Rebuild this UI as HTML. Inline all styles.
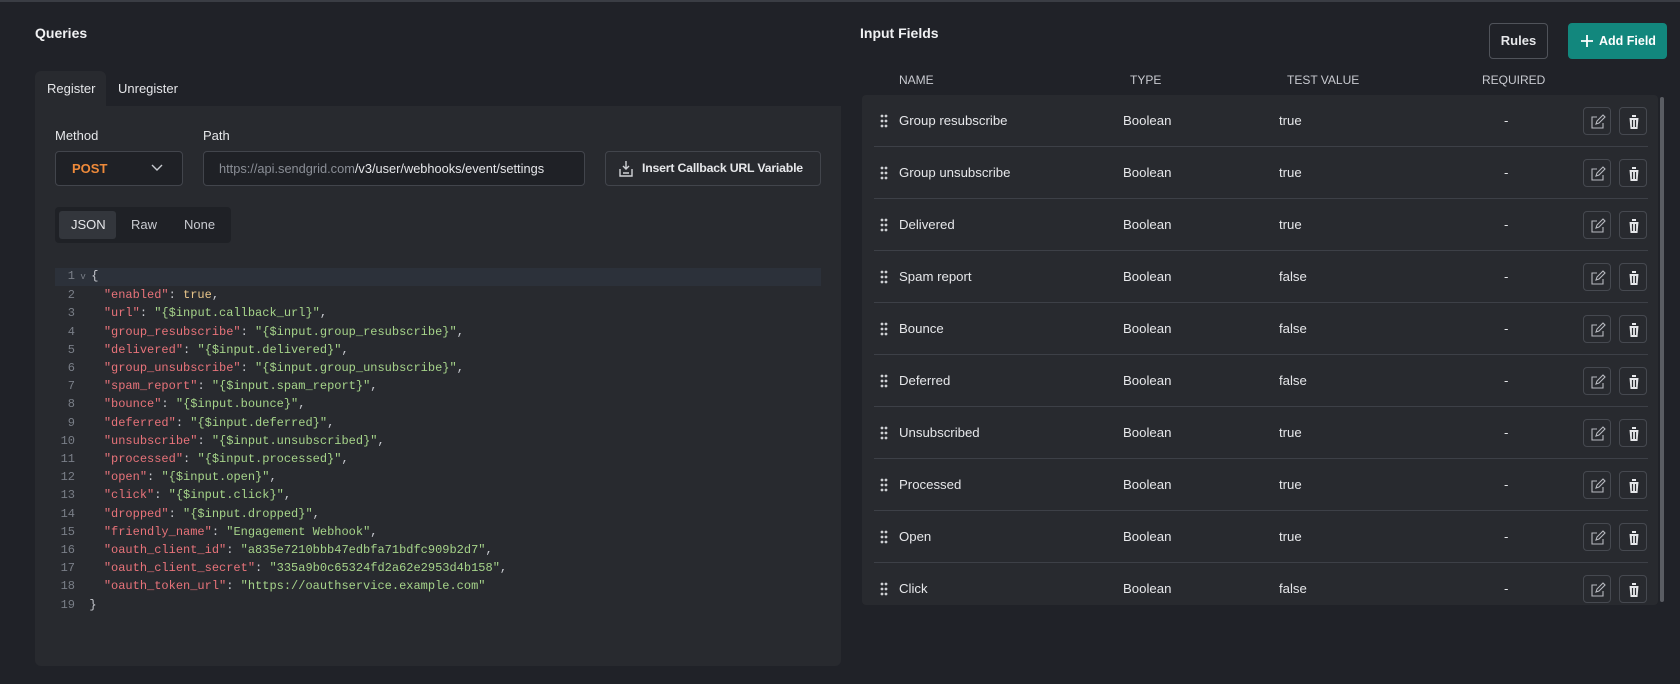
<!DOCTYPE html>
<html><head><meta charset="utf-8"><style>
*{box-sizing:border-box;margin:0;padding:0}
body{width:1680px;height:684px;background:#202228;font-family:"Liberation Sans",sans-serif;color:#e6e7ea;position:relative;overflow:hidden;border-top:2px solid #3a3d44}
.a{position:absolute}
.title{font-size:14px;font-weight:bold;color:#f0f1f3}
.panel{left:35px;top:104px;width:806px;height:560px;background:#282a2f;border-radius:0 0 6px 6px}
.tab{top:69px;height:35px;font-size:13px;line-height:35px;padding:0 12px}
.lbl{font-size:13px;color:#e6e7ea}
.box{border:1px solid #42454c;border-radius:4px;background:#1f2126;height:35px;font-size:13px;line-height:33px}
.code{font-family:"Liberation Mono",monospace;font-size:12px;line-height:18.2px;white-space:pre}
.k{color:#e8737a}.s{color:#a6d48a}.v{color:#e8c58a}.p{color:#c8cad0}
.ln{color:#7a7f88;text-align:right;width:20px;display:inline-block}
.hdr{font-size:12px;color:#c8cad0;top:71px}
.tbl{left:862px;top:93px;width:796px;height:510px;background:#282a2f;border-radius:4px}
.row{position:absolute;left:0;width:796px;height:52px;font-size:13.2px;line-height:52px}
.row .sep{position:absolute;left:12px;right:10px;bottom:0;height:1px;background:#3d4047}
.ib{position:absolute;top:12px;width:28px;height:28px;border:1px solid #464950;border-radius:4px}
.ib svg{position:absolute;left:6px;top:6px}
</style></head><body>
<div class="a title" style="left:35px;top:23px">Queries</div>
<div class="a title" style="left:860px;top:23px">Input Fields</div>

<div class="a tab" style="left:35px;width:71px;background:#282a2f;border-radius:6px 6px 0 0">Register</div>
<div class="a tab" style="left:106px">Unregister</div>
<div class="a panel"></div>

<div class="a lbl" style="left:55px;top:126px">Method</div>
<div class="a lbl" style="left:203px;top:126px">Path</div>
<div class="a box" style="left:55px;top:149px;width:128px;padding-left:16px;color:#ee8a3a;font-weight:bold">POST
<svg class="a" style="left:95px;top:12px" width="12" height="8" viewBox="0 0 12 8"><path d="M1 1l5 5 5-5" stroke="#c8cad0" stroke-width="1.4" fill="none"/></svg></div>
<div class="a box" style="left:203px;top:149px;width:382px;padding-left:15px;color:#e6e7ea;font-size:12.8px"><span style="color:#8a8e96">https://api.sendgrid.com</span>/v3/user/webhooks/event/settings</div>
<div class="a box" style="left:605px;top:149px;width:216px;background:#282a2f;font-weight:bold;padding-left:36px;font-size:12.3px;letter-spacing:-0.2px">Insert Callback URL Variable
<svg class="a" style="left:12px;top:8px" width="16" height="18" viewBox="0 0 16 18"><path d="M8 1v8M5 6l3 3 3-3M2 9v7h12v-7M5 13h6" stroke="#d0d2d6" stroke-width="1.4" fill="none"/></svg></div>

<div class="a" style="left:55px;top:205px;width:176px;height:36px;background:#1f2126;border-radius:4px"></div>
<div class="a" style="left:59px;top:209px;width:57px;height:28px;background:#33363c;border-radius:3px"></div>
<div class="a lbl" style="left:71px;top:215px">JSON</div>
<div class="a lbl" style="left:131px;top:215px;color:#c8cad0">Raw</div>
<div class="a lbl" style="left:184px;top:215px;color:#c8cad0">None</div>

<div class="a" style="left:55px;top:266px;width:766px;height:18px;background:#2c313a"></div>
<div class="a code" style="left:55px;top:265px"><span class="ln">1</span><span style="color:#7a7f88;font-size:9px"> v </span><span class="p">{</span>
<span class="ln">2</span>    <span class="k">"enabled"</span><span class="p">: </span><span class="v">true</span><span class="p">,</span>
<span class="ln">3</span>    <span class="k">"url"</span><span class="p">: </span><span class="s">"{$input.callback_url}"</span><span class="p">,</span>
<span class="ln">4</span>    <span class="k">"group_resubscribe"</span><span class="p">: </span><span class="s">"{$input.group_resubscribe}"</span><span class="p">,</span>
<span class="ln">5</span>    <span class="k">"delivered"</span><span class="p">: </span><span class="s">"{$input.delivered}"</span><span class="p">,</span>
<span class="ln">6</span>    <span class="k">"group_unsubscribe"</span><span class="p">: </span><span class="s">"{$input.group_unsubscribe}"</span><span class="p">,</span>
<span class="ln">7</span>    <span class="k">"spam_report"</span><span class="p">: </span><span class="s">"{$input.spam_report}"</span><span class="p">,</span>
<span class="ln">8</span>    <span class="k">"bounce"</span><span class="p">: </span><span class="s">"{$input.bounce}"</span><span class="p">,</span>
<span class="ln">9</span>    <span class="k">"deferred"</span><span class="p">: </span><span class="s">"{$input.deferred}"</span><span class="p">,</span>
<span class="ln">10</span>    <span class="k">"unsubscribe"</span><span class="p">: </span><span class="s">"{$input.unsubscribed}"</span><span class="p">,</span>
<span class="ln">11</span>    <span class="k">"processed"</span><span class="p">: </span><span class="s">"{$input.processed}"</span><span class="p">,</span>
<span class="ln">12</span>    <span class="k">"open"</span><span class="p">: </span><span class="s">"{$input.open}"</span><span class="p">,</span>
<span class="ln">13</span>    <span class="k">"click"</span><span class="p">: </span><span class="s">"{$input.click}"</span><span class="p">,</span>
<span class="ln">14</span>    <span class="k">"dropped"</span><span class="p">: </span><span class="s">"{$input.dropped}"</span><span class="p">,</span>
<span class="ln">15</span>    <span class="k">"friendly_name"</span><span class="p">: </span><span class="s">"Engagement Webhook"</span><span class="p">,</span>
<span class="ln">16</span>    <span class="k">"oauth_client_id"</span><span class="p">: </span><span class="s">"a835e7210bbb47edbfa71bdfc909b2d7"</span><span class="p">,</span>
<span class="ln">17</span>    <span class="k">"oauth_client_secret"</span><span class="p">: </span><span class="s">"335a9b0c65324fd2a62e2953d4b158"</span><span class="p">,</span>
<span class="ln">18</span>    <span class="k">"oauth_token_url"</span><span class="p">: </span><span class="s">"https://oauthservice.example.com"</span>
<span class="ln">19</span>  <span class="p">}</span></div>

<div class="a" style="left:1489px;top:21px;width:59px;height:36px;border:1px solid #50535a;border-radius:4px;font-size:13px;font-weight:bold;line-height:34px;text-align:center">Rules</div>
<div class="a" style="left:1568px;top:21px;width:99px;height:36px;background:#12877d;border-radius:4px;font-size:12.5px;font-weight:bold;line-height:36px;padding-left:31px;color:#fff">Add Field
<svg class="a" style="left:12px;top:11px" width="14" height="14" viewBox="0 0 14 14"><path d="M7 1v12M1 7h12" stroke="#fff" stroke-width="1.8"/></svg></div>

<div class="a hdr" style="left:899px">NAME</div>
<div class="a hdr" style="left:1130px">TYPE</div>
<div class="a hdr" style="left:1287px">TEST VALUE</div>
<div class="a hdr" style="left:1482px">REQUIRED</div>

<div class="a tbl">
<div class="row" style="top:0"><svg class="a" style="left:18px;top:19px" width="8" height="14"><g fill="#cfd1d5"><circle cx="2" cy="2" r="1.4"/><circle cx="6" cy="2" r="1.4"/><circle cx="2" cy="7" r="1.4"/><circle cx="6" cy="7" r="1.4"/><circle cx="2" cy="12" r="1.4"/><circle cx="6" cy="12" r="1.4"/></g></svg><span class="a" style="left:37px">Group resubscribe</span><span class="a" style="left:261px">Boolean</span><span class="a" style="left:417px">true</span><span class="a" style="left:642px">-</span><div class="ib" style="left:721px"><svg width="16" height="16" viewBox="0 0 16 16"><path d="M7 3H2v11h11V9M6 10l1-3 6-6 2 2-6 6z" stroke="#b8bac0" stroke-width="1.1" fill="none"/></svg></div><div class="ib" style="left:757px"><svg width="16" height="16" viewBox="0 0 16 16"><path d="M2 3h12M6 3V1h4v2M3.5 4h9l-1 11h-7z" fill="#e6e7ea"/><path d="M6.5 6v7M9.5 6v7" stroke="#282a2f" stroke-width="1.2"/></svg></div><div class="sep"></div></div>
</div>
<script>
var d=[["Group resubscribe","true"],["Group unsubscribe","true"],["Delivered","true"],["Spam report","false"],["Bounce","false"],["Deferred","false"],["Unsubscribed","true"],["Processed","true"],["Open","true"],["Click","false"]];
var t=document.querySelector('.tbl'),tpl=t.querySelector('.row');t.innerHTML='';
d.forEach(function(r,i){var e=tpl.cloneNode(true);e.style.top=(i*52)+'px';var s=e.querySelectorAll('span');s[0].textContent=r[0];s[2].textContent=r[1];if(i==9)e.querySelector('.sep').remove();t.appendChild(e);});
</script>
<div class="a" style="left:1660px;top:95px;width:4px;height:505px;background:#5a5d63;border-radius:2px"></div>
</body></html>
